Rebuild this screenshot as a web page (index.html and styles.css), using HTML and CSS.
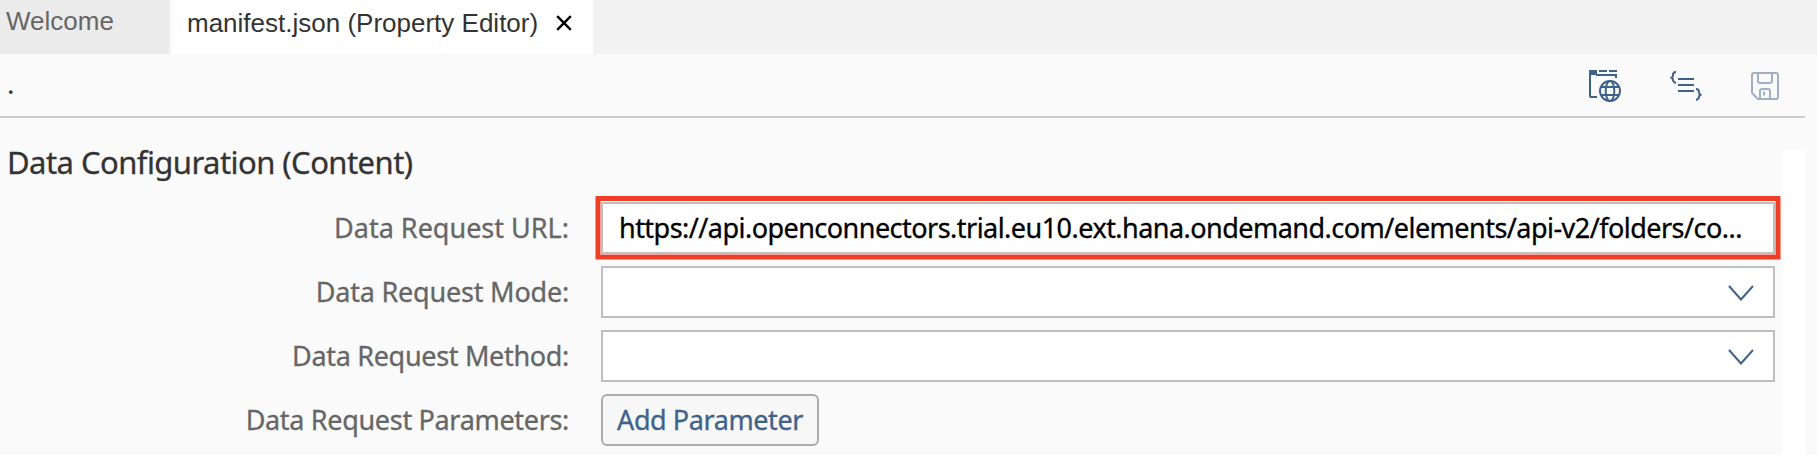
FILE: index.html
```html
<!DOCTYPE html>
<html lang="en">
<head>
<meta charset="utf-8">
<title>manifest.json (Property Editor)</title>
<link rel="stylesheet" href="styles.css">
</head>
<body>
<nav class="tabs">
  <div class="tab"><span class="tab-name">Welcome</span></div>
  <div class="tab active">
    <span class="tab-name">manifest.json (Property Editor)</span>
    <svg class="close" width="16" height="16" viewBox="0 0 16 16"><path d="M1.2 1.2 14.8 14.8M14.8 1.2 1.2 14.8"/></svg>
  </div>
</nav>
<main class="editor">
  <header class="toolbar">
    <span class="path">.</span>
    <div class="actions">
      <svg class="icon" width="34" height="34" viewBox="0 0 34 34">
        <path class="solid" d="M1 1h8v5H1z"/>
        <path d="M2 2v25q0 1 1 1h6M8 6h20v3M11 2h8M21 2h8"/>
        <circle cx="22" cy="22" r="10"/>
        <ellipse cx="22" cy="22" rx="4.3" ry="10"/>
        <path d="M13 18h18M13 26h18"/>
      </svg>
      <svg class="icon" width="34" height="34" viewBox="0 0 34 34">
        <path d="M7 3Q4 3 4 6T1.500 8.500Q4 9 4 11T7 14M9 10h16M9 16h16M9 22h16M27 20Q30 20 30 23T32.500 25.500Q30 26 30 28T27 31"/>
      </svg>
      <svg class="icon disabled" width="34" height="34" viewBox="0 0 34 34">
        <path d="M4 4h22q2 0 2 2v22q0 2-2 2H8L2 24V6q0-2 2-2zM8 4v8q0 2 2 2h10q2 0 2-2V4M10 30v-8q0-2 2-2h6q2 0 2 2v8M14 22.500v4"/>
      </svg>
    </div>
  </header>
  <section class="content">
    <h1 class="heading">Data Configuration (Content)</h1>
    <div class="form">
      <span class="label l-url">Data Request URL:</span>
      <div class="field marked"><span class="url">https://api.openconnectors.trial.eu10.ext.hana.ondemand.com/elements/api-v2/folders/co...</span></div>
      <span class="label l-mode">Data Request Mode:</span>
      <div class="field"><svg class="arrow" width="26" height="16" viewBox="0 0 26 16"><path d="M1 1 13 14.500 25 1"/></svg></div>
      <span class="label">Data Request Method:</span>
      <div class="field"><svg class="arrow" width="26" height="16" viewBox="0 0 26 16"><path d="M1 1 13 14.500 25 1"/></svg></div>
      <span class="label">Data Request Parameters:</span>
      <button class="add">Add Parameter</button>
    </div>
    <div class="scrollbar"></div>
  </section>
</main>
</body>
</html>
```
FILE: styles.css
```css
* { box-sizing: border-box; }
body {
  margin: 0;
  height: 455px;
  overflow: hidden;
  background: #fafafa;
  color: #333;
  font-family: "Noto Sans", "Open Sans", sans-serif;
}
.tabs {
  display: flex;
  height: 54px;
  background: #f2f2f2;
  font: 26px/30px "Liberation Sans", Arial, sans-serif;
}
.tab {
  width: 169px;
  padding: 6px 0 0 6px;
  background: #ebebeb;
  color: #666;
}
.tab.active {
  display: flex;
  width: 422px;
  margin-left: 2px;
  padding: 8px 0 0 16px;
  background: #fff;
  color: #333;
  white-space: nowrap;
}
.close { margin: 7px 0 0 18px; fill: none; stroke: #000; stroke-width: 2.4; }
.editor { width: 1815px; }
.toolbar {
  display: flex;
  justify-content: space-between;
  width: 1805px;
  height: 64px;
  border-bottom: 2px solid #ccc;
}
.path { padding: 10px 0 0 7px; font-size: 28px; line-height: 38px; }
.actions { display: flex; gap: 47px; padding: 15px 21px 0 0; }
.icon { fill: none; stroke: #3f6289; stroke-width: 2; }
.icon .solid { fill: #3f6289; stroke: none; }
.icon.disabled { stroke: #9fb0c4; }
.content { display: flex; width: 1805px; height: 337px; flex-wrap: wrap; }
.heading {
  width: 1805px;
  height: 32px;
  margin: 0;
  padding: 22px 0 0 7px;
  font-size: 31px;
  font-weight: 400;
  line-height: 44px;
  letter-spacing: -0.55px;
  white-space: nowrap;
  -webkit-text-stroke: 0.3px;
}
.form {
  display: grid;
  grid-template-columns: 569px 1174px;
  grid-auto-rows: 52px;
  gap: 12px 32px;
  width: 1783px;
  height: 305px;
  padding-top: 52px;
}
.label {
  color: #666;
  font-size: 27px;
  line-height: 52px;
  text-align: right;
  letter-spacing: -0.32px;
  white-space: nowrap;
  -webkit-text-stroke: 0.3px;
}
.label.l-url { letter-spacing: 0; }
.label.l-mode { letter-spacing: -0.2px; }
.field {
  display: flex;
  justify-content: flex-end;
  align-items: center;
  border: 2px solid #bfbfbf;
  background: #fff;
  padding: 2px 19px 0 0;
}
.field.marked {
  justify-content: flex-start;
  padding: 0 0 0 16px;
  box-shadow: 0 -1px 0 #fff, 0 0 0 1px #f2a196, 0 0 0 5px #ee3e25, 0 -1px 0 5px #ee3e25, 0 0 0 5.500px #ee3e25;
}
.url {
  color: #000;
  font-size: 27px;
  line-height: 48px;
  letter-spacing: -0.53px;
  white-space: nowrap;
  -webkit-text-stroke: 0.3px;
}
.arrow { fill: none; stroke: #3f6289; stroke-width: 2; }
.add {
  width: 218px;
  height: 52px;
  padding: 0;
  border: 2px solid #ababab;
  border-radius: 6px;
  background: #f7f7f7;
  color: #3f6289;
  font: 27px/48px "Noto Sans", "Open Sans", sans-serif;
  letter-spacing: -0.42px;
  -webkit-text-stroke: 0.3px;
}
.scrollbar { width: 22px; height: 305px; background: #fff; }
```
